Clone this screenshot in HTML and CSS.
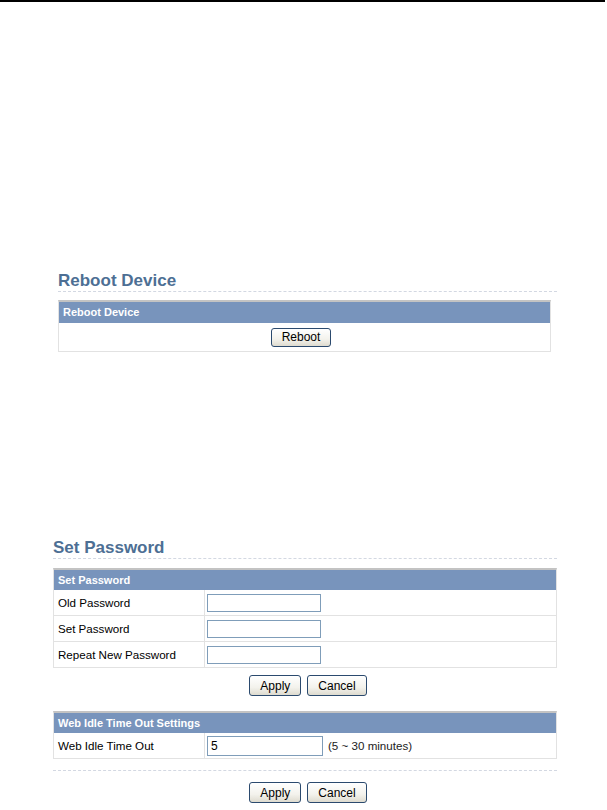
FILE: index.html
```
<!DOCTYPE html>
<html>
<head>
<meta charset="utf-8">
<title>Settings</title>
<link rel="stylesheet" href="styles.css">
</head>
<body>
<div class="topline"></div>

<section class="reboot">
  <h2 class="section-title">Reboot Device</h2>
  <table class="panel reboot-panel">
    <tr><th>Reboot Device</th></tr>
    <tr><td class="center-cell"><button class="btn btn-small" type="button">Reboot</button></td></tr>
  </table>
</section>

<section class="password">
  <h2 class="section-title">Set Password</h2>
  <table class="panel">
    <tr><th colspan="2">Set Password</th></tr>
    <tr><td class="label">Old Password</td><td class="field"><input class="text-input" type="password"></td></tr>
    <tr><td class="label">Set Password</td><td class="field"><input class="text-input" type="password"></td></tr>
    <tr class="last"><td class="label">Repeat New Password</td><td class="field"><input class="text-input" type="password"></td></tr>
  </table>
  <div class="actions"><button class="btn" type="button">Apply</button><button class="btn" type="button">Cancel</button></div>

  <table class="panel idle-panel">
    <tr><th colspan="2">Web Idle Time Out Settings</th></tr>
    <tr class="last"><td class="label">Web Idle Time Out</td><td class="field"><div class="inline-field"><input class="text-input wide" type="text" value="5"><span class="hint">(5 ~ 30 minutes)</span></div></td></tr>
  </table>
  <div class="divider"></div>
  <div class="actions bottom"><button class="btn" type="button">Apply</button><button class="btn" type="button">Cancel</button></div>
</section>
</body>
</html>
```
FILE: styles.css
```
body {
  margin: 0;
  background: #fff;
  color: #000;
  font-family: "Liberation Sans", Arial, sans-serif;
  font-size: 11.6px;
}

.topline {
  width: 605px;
  height: 2px;
  background: #000;
}

.section-title {
  margin: 0;
  font-size: 17px;
  font-weight: bold;
  line-height: 20px;
  color: #4d6f94;
  border-bottom: 1px dashed #d3d8e2;
}

.reboot {
  margin: 269px 0 0 58px;
  width: 499px;
}

.password {
  margin: 186px 0 0 53px;
  width: 504px;
}

.panel {
  border-collapse: separate;
  border-spacing: 0;
  border: 1px solid #e2e2e2;
  border-top: 2px solid #c3c3c3;
  width: 504px;
  margin-top: 9px;
}

.reboot-panel {
  width: 493px;
  margin-top: 8px;
}

.panel th {
  background: #7894bc;
  color: #fff;
  font-size: 11px;
  font-weight: bold;
  text-align: left;
  line-height: 20px;
  padding: 0 4px;
  white-space: nowrap;
}

.reboot-panel th {
  line-height: 21px;
}

.panel td {
  padding: 0;
  border-bottom: 1px solid #e2e2e2;
  vertical-align: middle;
}

.panel tr.last td,
.reboot-panel td {
  border-bottom: none;
}

.center-cell {
  text-align: center;
  height: 28px;
  padding-right: 7px !important;
}

.label {
  width: 146px;
  padding: 0 0 0 4px !important;
  border-right: 1px solid #e2e2e2;
  line-height: 25px;
  white-space: nowrap;
}

.field {
  padding: 0 0 0 2px !important;
}

.text-input {
  display: block;
  box-sizing: border-box;
  width: 114px;
  height: 18px;
  margin: 0;
  padding: 0 3px;
  border: 1px solid #7f9db9;
  font-family: "Liberation Sans", Arial, sans-serif;
  font-size: 12px;
  color: #000;
  background: #fff;
}

.text-input.wide {
  width: 116px;
  height: 20px;
}

.inline-field {
  display: flex;
  align-items: center;
}

.hint {
  margin-left: 5px;
  color: #222;
  font-size: 11.6px;
}

.btn {
  box-sizing: border-box;
  height: 21px;
  margin: 0;
  padding: 0 10px;
  border: 1px solid #2b4a6e;
  border-radius: 3px;
  background: linear-gradient(#ffffff, #f3f2ec 60%, #dedbcf);
  font-family: "Liberation Sans", Arial, sans-serif;
  font-size: 12px;
  color: #000;
}

.btn-small {
  height: 19px;
  vertical-align: middle;
}

.actions {
  display: flex;
  justify-content: center;
  gap: 6px;
  padding: 7px 0 0 6px;
}

.idle-panel {
  margin-top: 15px;
}

.divider {
  margin-top: 11px;
  border-top: 1px dashed #d3d8e2;
}

.actions.bottom {
  padding-top: 11px;
}
```
